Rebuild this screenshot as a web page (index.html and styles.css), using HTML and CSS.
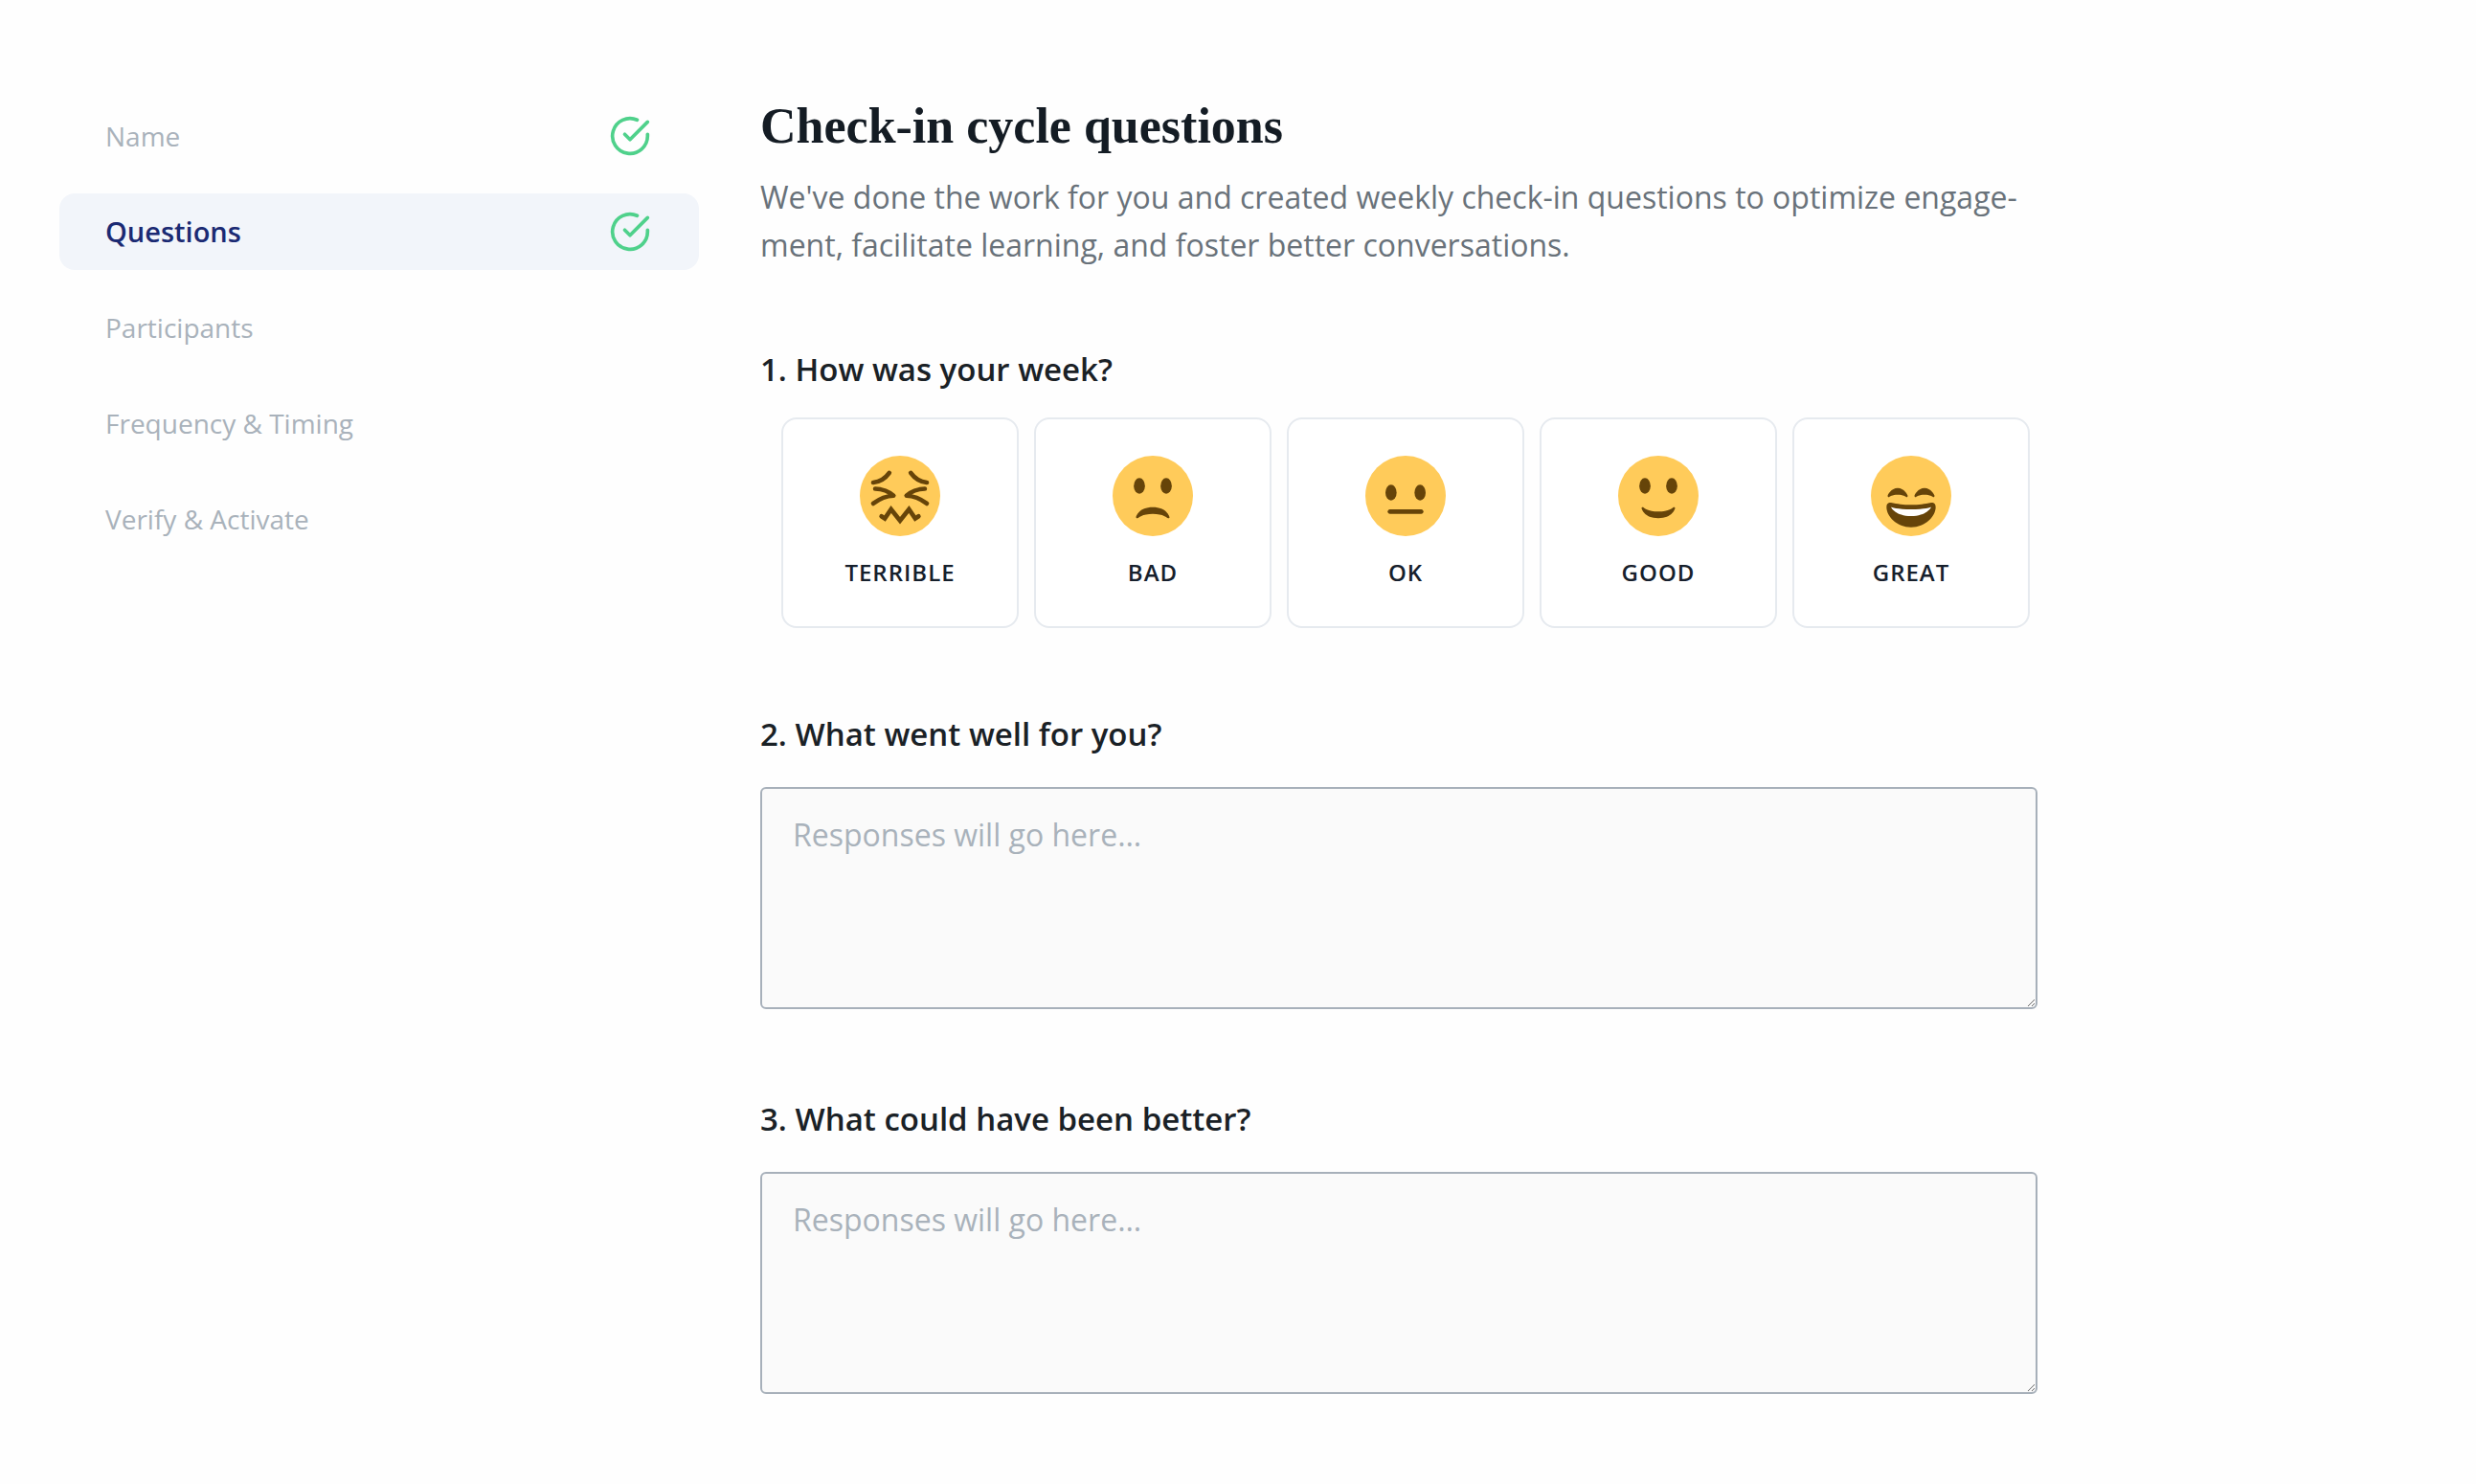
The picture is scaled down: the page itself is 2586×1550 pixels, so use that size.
FILE: index.html
```html
<!DOCTYPE html>
<html lang="en">
<head>
  <meta charset="UTF-8">
  <meta name="viewport" content="width=device-width, initial-scale=1">
  <title>Check-in cycle questions</title>
  <link rel="stylesheet" href="styles.css">
</head>
<body>
  <div class="container">
    <nav class="steps">
      <a href="#name" class="step">
        <span>Name</span>
        <svg class="step-check" viewBox="0 0 24 24"><path d="M22 11.08V12a10 10 0 1 1-5.93-9.14"/><polyline points="22 4 12 14.01 9 11.01"/></svg>
      </a>
      <a href="#questions" class="step active">
        <span>Questions</span>
        <svg class="step-check" viewBox="0 0 24 24"><path d="M22 11.08V12a10 10 0 1 1-5.93-9.14"/><polyline points="22 4 12 14.01 9 11.01"/></svg>
      </a>
      <a href="#participants" class="step"><span>Participants</span></a>
      <a href="#timing" class="step"><span>Frequency &amp; Timing</span></a>
      <a href="#verify" class="step"><span>Verify &amp; Activate</span></a>
    </nav>

    <main class="content">
      <h1>Check-in cycle questions</h1>
      <p class="intro">We've done the work for you and created weekly check-in questions to optimize engage&shy;ment, facilitate learning, and foster better conversations.</p>

      <section class="question">
        <h2 class="question-title">1. How was your week?</h2>
        <div class="moods">
          <button type="button" class="mood">
            <svg class="face" viewBox="0 0 36 36">
              <circle class="skin" cx="18" cy="18" r="18"/>
              <g class="lines">
                <path d="M13.2 7.7Q10.4 11.6 6 12M22.8 7.7q2.8 3.9 7.2 4.3"/>
                <path d="M6.9 14.8q5 .2 8.2 3.1-4.6.1-9.1 3.5M29.1 14.8q-5 .2-8.2 3.1 4.6.1 9.1 3.5"/>
                <path class="zigzag" d="M9.7 27.1l1.5 1 2.8-4.1 4 5 4-5 2.8 4.1 1.5-1"/>
              </g>
            </svg>
            <span class="mood-label">Terrible</span>
          </button>
          <button type="button" class="mood">
            <svg class="face" viewBox="0 0 36 36">
              <circle class="skin" cx="18" cy="18" r="18"/>
              <ellipse class="ink" cx="12" cy="13.5" rx="2.5" ry="3.5"/>
              <ellipse class="ink" cx="24" cy="13.5" rx="2.5" ry="3.5"/>
              <path class="ink" d="M25.485 27.379C25.44 27.2 24.317 23 18 23c-6.318 0-7.44 4.2-7.485 4.379-.055.217.043.442.237.554.195.109.439.079.6-.077.019-.019 1.954-1.856 6.648-1.856s6.63 1.837 6.648 1.855c.096.095.224.145.352.145.084 0 .169-.021.246-.064.196-.112.294-.339.239-.557z"/>
            </svg>
            <span class="mood-label">Bad</span>
          </button>
          <button type="button" class="mood">
            <svg class="face" viewBox="0 0 36 36">
              <circle class="skin" cx="18" cy="18" r="18"/>
              <ellipse class="ink" cx="11.5" cy="16.5" rx="2.5" ry="3.5"/>
              <ellipse class="ink" cx="24.5" cy="16.5" rx="2.5" ry="3.5"/>
              <path class="ink" d="M25 26H11c-.552 0-1-.447-1-1s.448-1 1-1h14c.553 0 1 .447 1 1s-.447 1-1 1z"/>
            </svg>
            <span class="mood-label">OK</span>
          </button>
          <button type="button" class="mood">
            <svg class="face" viewBox="0 0 36 36">
              <circle class="skin" cx="18" cy="18" r="18"/>
              <ellipse class="ink" cx="12" cy="13.5" rx="2.5" ry="3.5"/>
              <ellipse class="ink" cx="24" cy="13.5" rx="2.5" ry="3.5"/>
              <path class="ink" d="M10.515 23.621C10.56 23.8 11.683 28 18 28c6.318 0 7.44-4.2 7.485-4.379.055-.217-.043-.442-.237-.554-.195-.111-.439-.078-.6.077C24.629 23.163 22.694 25 18 25s-6.63-1.837-6.648-1.855C11.256 23.05 11.128 23 11 23c-.084 0-.169.021-.246.064-.196.112-.294.339-.239.557z"/>
            </svg>
            <span class="mood-label">Good</span>
          </button>
          <button type="button" class="mood">
            <svg class="face" viewBox="0 0 36 36">
              <circle class="skin" cx="18" cy="18" r="18"/>
              <path class="ink" d="M28.457 17.797c-.06-.135-1.499-3.297-4.457-3.297-2.957 0-4.397 3.162-4.457 3.297-.092.207-.032.449.145.591.175.142.426.147.61.014.012-.009 1.262-.902 3.702-.902 2.426 0 3.674.881 3.702.901.088.066.194.099.298.099.11 0 .221-.037.312-.109.177-.142.238-.386.145-.594zm-12 0c-.06-.135-1.499-3.297-4.457-3.297-2.957 0-4.397 3.162-4.457 3.297-.092.207-.032.449.144.591.176.142.427.147.61.014.013-.009 1.262-.902 3.703-.902 2.426 0 3.674.881 3.702.901.089.066.194.099.298.099.11 0 .221-.037.312-.109.178-.142.237-.386.145-.594z"/>
              <path class="ink" d="M18 22c-3.623 0-6.027-.422-9-1-.679-.131-2 0-2 2 0 4 4.595 9 11 9 6.404 0 11-5 11-9 0-2-1.321-2.132-2-2-2.973.578-5.377 1-9 1z"/>
              <path fill="#fff" d="M9 23s3 1 9 1 9-1 9-1-2 4-9 4-9-4-9-4z"/>
            </svg>
            <span class="mood-label">Great</span>
          </button>
        </div>
      </section>

      <section class="question">
        <label class="question-title" for="went-well">2. What went well for you?</label>
        <textarea id="went-well" class="response" placeholder="Responses will go here…"></textarea>
      </section>

      <section class="question">
        <label class="question-title" for="better">3. What could have been better?</label>
        <textarea id="better" class="response" placeholder="Responses will go here…"></textarea>
      </section>
    </main>
  </div>
</body>
</html>
```
FILE: styles.css
```css
* {
  box-sizing: border-box;
}
body {
  margin: 0;
  background-color: #fefefe;
  color: #1a2126;
  font-family: "Open Sans", sans-serif;
  font-size: 32px;
  line-height: 50px;
}
.container {
  display: flex;
  align-items: flex-start;
  gap: 64px;
  padding: 102px 62px 0;
}

/* Sidebar steps */
.steps {
  display: flex;
  flex-direction: column;
  gap: 20px;
  flex: 0 1 668px;
}
.step {
  display: flex;
  align-items: center;
  justify-content: space-between;
  padding: 15px 50px 15px 48px;
  border-radius: 16px;
  color: #a9b2bb;
  font-size: 28px;
  text-decoration: none;
}
.step.active {
  background-color: #f2f5fa;
  color: #1b2a73;
  font-size: 29px;
  font-weight: 600;
}
.step-check {
  width: 44px;
  height: 44px;
  fill: none;
  stroke: #4fd18b;
  stroke-width: 2;
  stroke-linecap: round;
  stroke-linejoin: round;
}

/* Main column */
.content {
  flex: 0 1 1334px;
  min-width: 0;
}
h1 {
  margin: 0 0 19px;
  color: #141c24;
  font-family: "Source Serif Pro", "Liberation Serif", serif;
  font-size: 52px;
  font-weight: 700;
  line-height: 60px;
}
.intro {
  margin: 0 0 80px;
  color: #69727a;
}
.question {
  margin-bottom: 90px;
}
.question-title {
  display: block;
  margin: 0 0 30px;
  font-size: 33px;
  font-weight: 600;
}
h2.question-title {
  margin-bottom: 25px;
}

/* Mood picker */
.moods {
  display: grid;
  grid-template-columns: repeat(5, 1fr);
  gap: 16px;
  margin-bottom: 86px;
  padding: 0 8px 0 22px;
}
.mood {
  display: flex;
  flex-direction: column;
  align-items: center;
  gap: 20px;
  padding: 38px 0;
  border: 2px solid #e6eaef;
  border-radius: 16px;
  background-color: #fff;
  color: #16202c;
  font-family: inherit;
  font-size: 24px;
  font-weight: 600;
  line-height: 36px;
  cursor: pointer;
}
.mood-label {
  letter-spacing: 1px;
  text-transform: uppercase;
}
.face {
  width: 84px;
  height: 84px;
}
.skin {
  fill: #ffcb5a;
}
.ink {
  fill: #664409;
}
.lines {
  fill: none;
  stroke: #664409;
  stroke-width: 2;
  stroke-linecap: round;
  stroke-linejoin: round;
}
.zigzag {
  stroke-linejoin: miter;
}
.question:has(.moods) {
  margin-bottom: 0;
}

.response {
  display: block;
  width: 100%;
  height: 232px;
  padding: 23px 32px;
  border: 2px solid #a7b0ba;
  border-radius: 6px;
  background-color: #fafafa;
  color: inherit;
  font: inherit;
  resize: vertical;
}
.response::placeholder {
  color: #a9b2bb;
}
```
